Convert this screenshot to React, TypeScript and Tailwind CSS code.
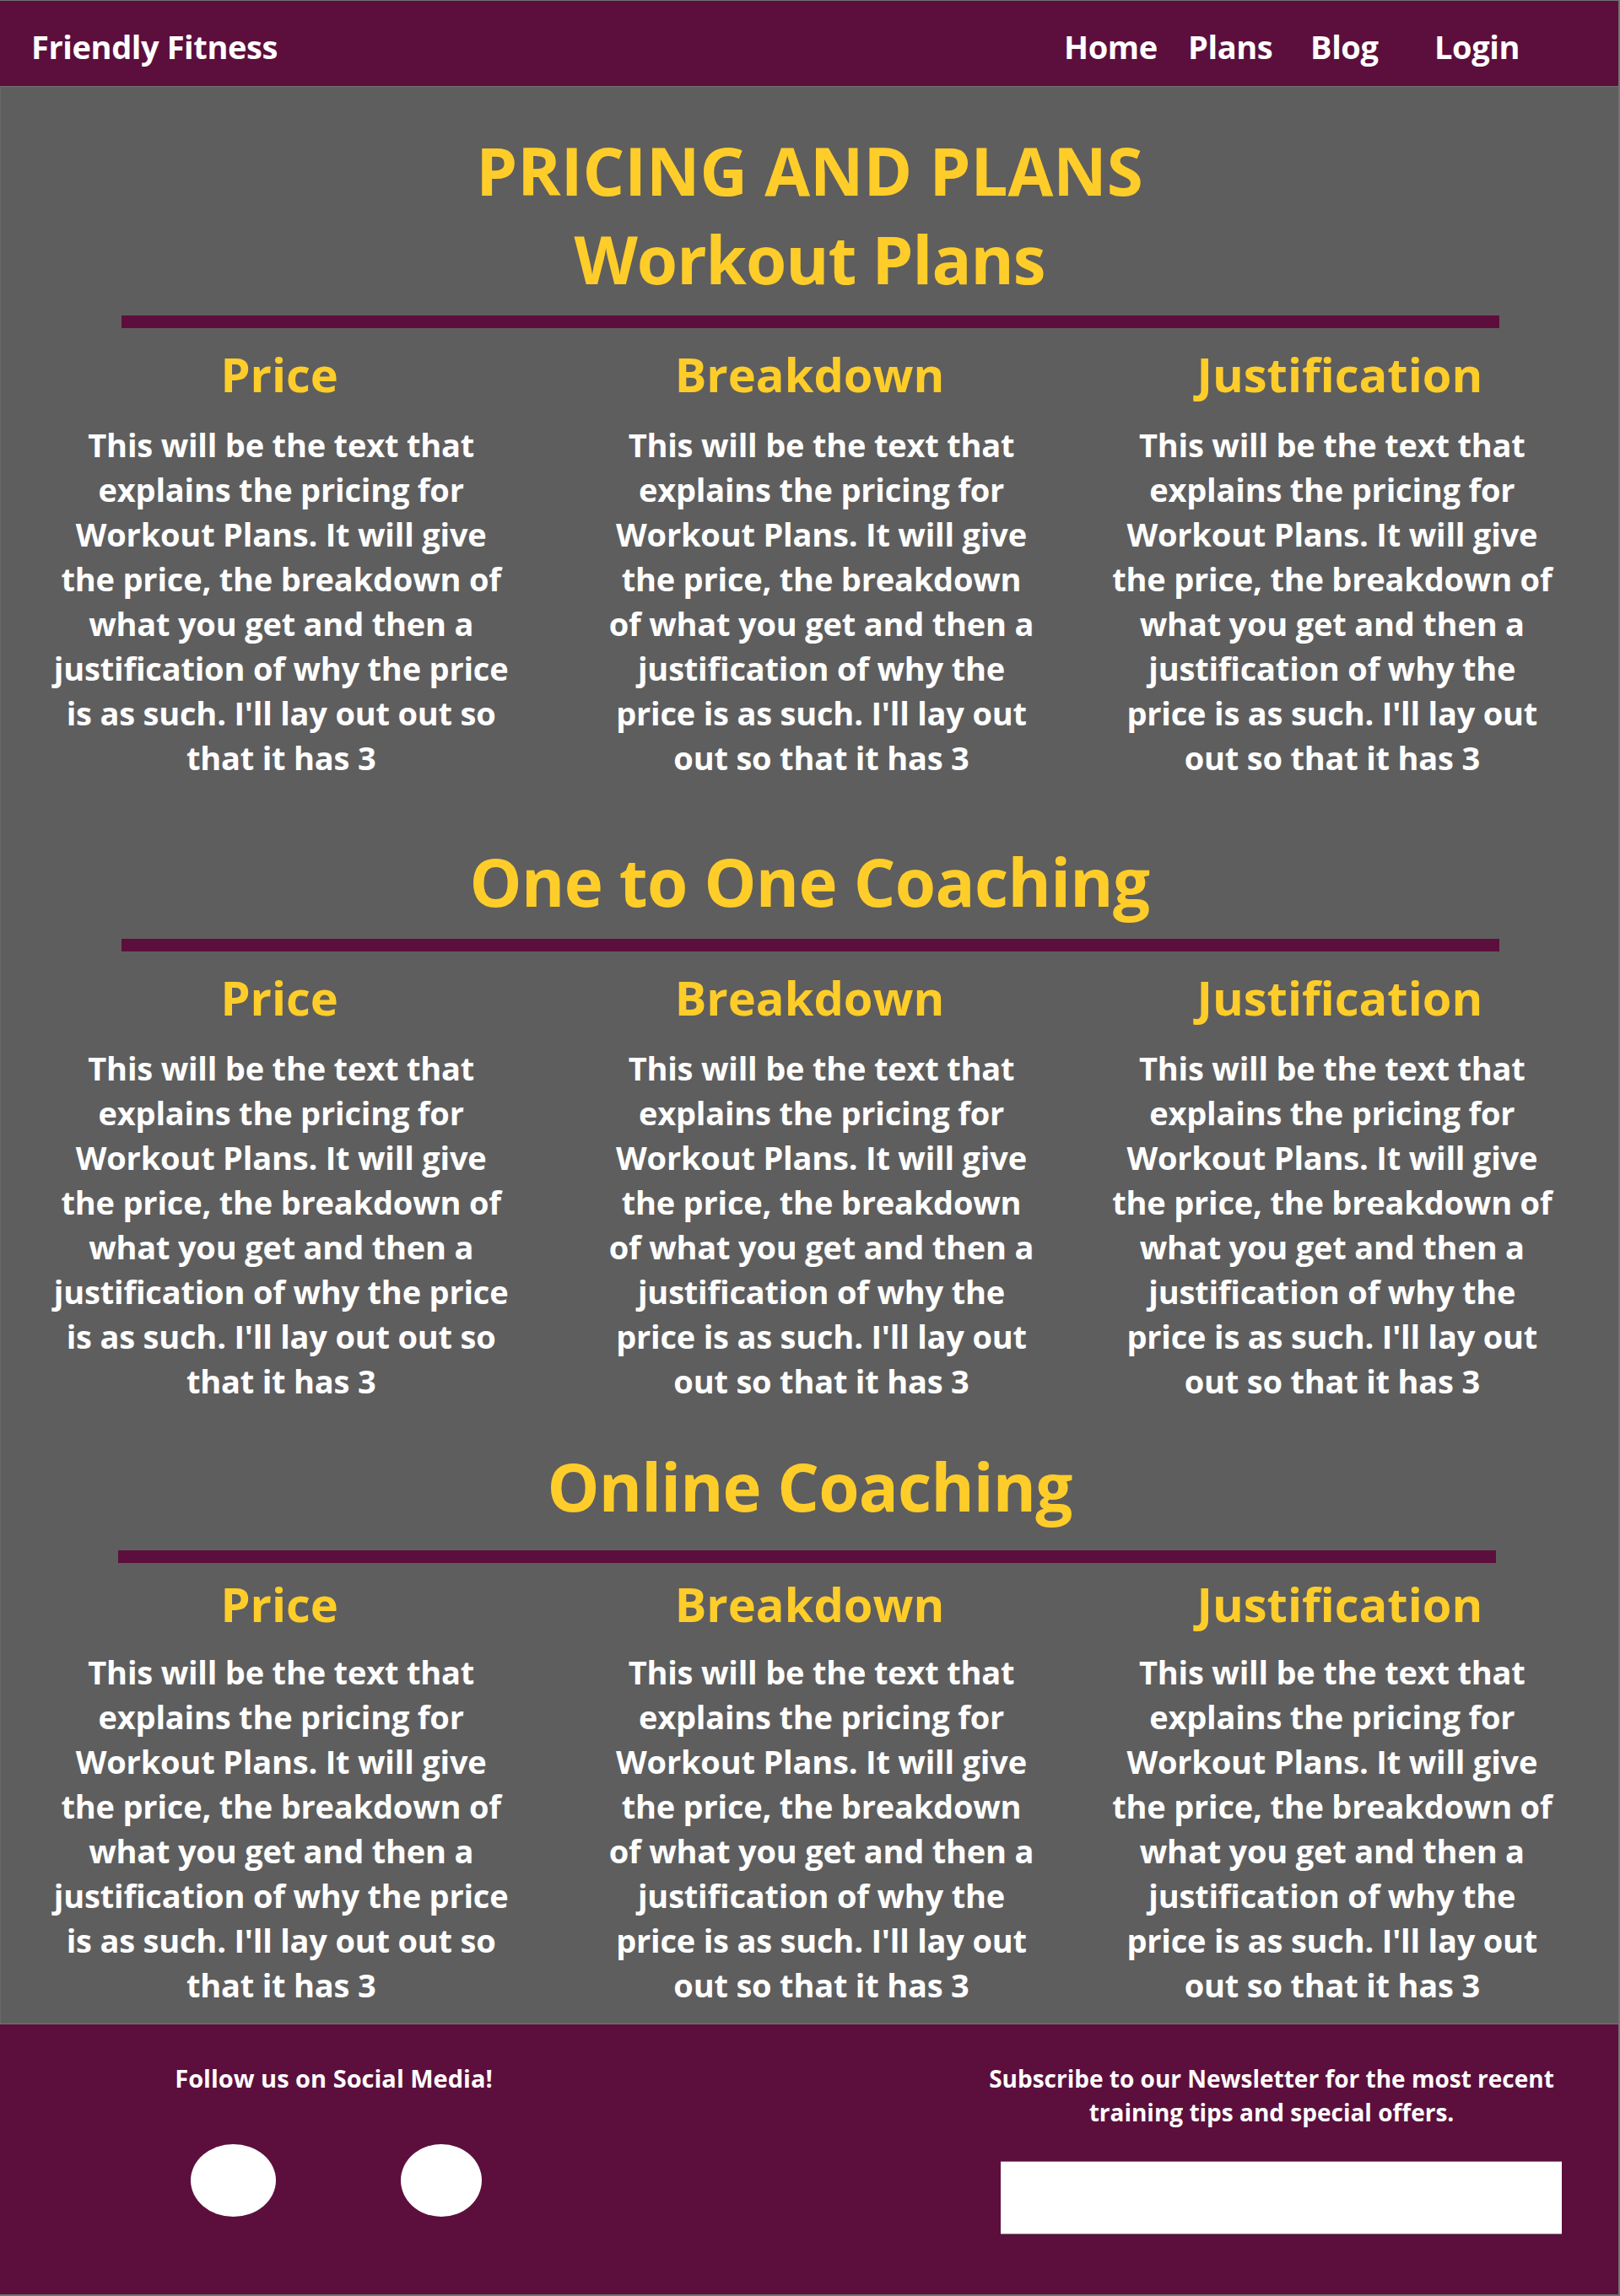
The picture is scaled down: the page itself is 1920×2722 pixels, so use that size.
import React from "react";

const COLS: { title: string; lines: string[]; shift: string }[] = [
  {
    title: "Price",
    shift: "pl-[4px]",
    lines: [
      "This will be the text that",
      "explains the pricing for",
      "Workout Plans. It will give",
      "the price, the breakdown of",
      "what you get and then a",
      "justification of why the price",
      "is as such. I'll lay out out so",
      "that it has 3",
    ],
  },
  {
    title: "Breakdown",
    shift: "pl-[28px]",
    lines: [
      "This will be the text that",
      "explains the pricing for",
      "Workout Plans. It will give",
      "the price, the breakdown",
      "of what you get and then a",
      "justification of why the",
      "price is as such. I'll lay out",
      "out so that it has 3",
    ],
  },
  {
    title: "Justification",
    shift: "pr-[18px]",
    lines: [
      "This will be the text that",
      "explains the pricing for",
      "Workout Plans. It will give",
      "the price, the breakdown of",
      "what you get and then a",
      "justification of why the",
      "price is as such. I'll lay out",
      "out so that it has 3",
    ],
  },
];

function Columns({ headMt, paraMt }: { headMt: string; paraMt: string }) {
  return (
    <div className="grid grid-cols-3 px-[16px]">
      {COLS.map((c) => (
        <div key={c.title} className="flex flex-col items-center">
          <h3
            className={`${headMt} text-[56px] leading-[80px] font-bold text-[#ffcd2a] whitespace-nowrap`}
          >
            {c.title}
          </h3>
          <p
            className={`${paraMt} ${c.shift} text-center text-[38px] leading-[53px] tracking-[-0.2px] font-bold text-white whitespace-nowrap`}
          >
            {c.lines.map((l, i) => (
              <React.Fragment key={i}>
                {l}
                {i < c.lines.length - 1 && <br />}
              </React.Fragment>
            ))}
          </p>
        </div>
      ))}
    </div>
  );
}

export default function App() {
  return (
    <div className="w-[1920px] h-[2722px] bg-[#727272] pt-[1px] font-['Open_Sans',sans-serif]">
      <div className="w-[1918px]">
        {/* Header */}
        <header className="h-[101px] bg-[#5c0f3d] flex items-start pt-[27px] text-white text-[38px] leading-[54px] tracking-[-0.4px] font-bold">
          <div className="w-[1261px] pl-[37px] whitespace-nowrap">Friendly Fitness</div>
          <nav className="flex whitespace-nowrap">
            <a className="w-[147px]">Home</a>
            <a className="w-[145px]">Plans</a>
            <a className="w-[147px]">Blog</a>
            <a>Login</a>
          </nav>
        </header>

        {/* Main */}
        <main className="h-[2298px] bg-[#5e5e5e] border-t border-b border-[#737373] border-l border-l-[#6a6a6a] flex flex-col">
          {/* Section 1 */}
          <h1 className="mt-[47px] text-center text-[78px] leading-[105px] font-bold text-[#ffcd2a]">
            PRICING AND PLANS
            <br />
            <span className="tracking-[-1px]">Workout Plans</span>
          </h1>
          <div className="mt-[14px] ml-[143px] w-[1633px] h-[15px] bg-[#5c0f3d]" />
          <Columns headMt="mt-[14px]" paraMt="mt-[18px]" />

          {/* Section 2 */}
          <h2 className="mt-[68px] text-center text-[78px] leading-[105px] tracking-[-0.6px] font-bold text-[#ffcd2a]">
            One to One Coaching
          </h2>
          <div className="mt-[15px] ml-[143px] w-[1633px] h-[15px] bg-[#5c0f3d]" />
          <Columns headMt="mt-[14px]" paraMt="mt-[18px]" />

          {/* Section 3 */}
          <h2 className="mt-[46px] text-center text-[78px] leading-[105px] tracking-[-0.8px] font-bold text-[#ffcd2a]">
            Online Coaching
          </h2>
          <div className="mt-[23px] ml-[139px] w-[1633px] h-[15px] bg-[#5c0f3d]" />
          <Columns headMt="mt-[8px]" paraMt="mt-[15px]" />
        </main>

        {/* Footer */}
        <footer className="h-[320px] bg-[#5c0f3d] flex text-white font-bold leading-[40px]">
          <div className="w-[791px] pt-[44px] flex flex-col">
            <p className="text-center text-[29px] whitespace-nowrap">Follow us on Social Media!</p>
            <div className="mt-[58px] ml-[226px] flex gap-[148px]">
              <div className="w-[101px] h-[86px] rounded-[50%] bg-white" />
              <div className="w-[96px] h-[86px] rounded-[50%] bg-white" />
            </div>
          </div>
          <div className="ml-[378px] w-[676px] pt-[44px] flex flex-col">
            <p className="text-center text-[28px] whitespace-nowrap">
              Subscribe to our Newsletter for the most recent
              <br />
              training tips and special offers.
            </p>
            <div className="mt-[38px] ml-[17px] w-[665px] h-[87px] bg-white border-y border-[#7a7a7a]" />
          </div>
        </footer>
      </div>
    </div>
  );
}
